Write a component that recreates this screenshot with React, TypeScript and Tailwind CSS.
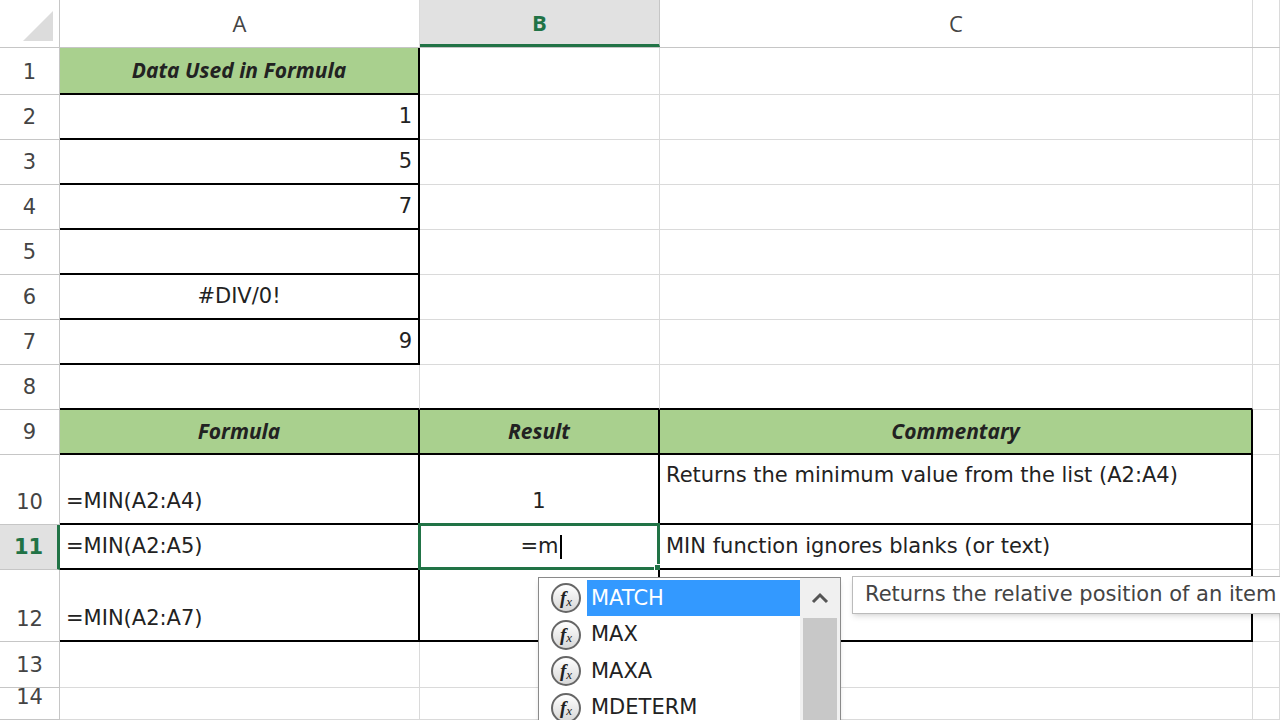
import React from "react";

const cols = [
  { k: "A", w: "w-[360px]" },
  { k: "B", w: "w-[240px]" },
  { k: "C", w: "w-[593px]" },
  { k: "", w: "flex-1" },
];
const heights = ["h-[47px]", "h-[45px]", "h-[45px]", "h-[45px]", "h-[45px]", "h-[45px]", "h-[45px]", "h-[45px]", "h-[45px]", "h-[70px]", "h-[45px]", "h-[72px]", "h-[46px]", "h-[32px]"];

type Cell = { t?: string; align?: string; head?: boolean; top?: boolean };
const data: Record<string, Cell> = {
  A1: { t: "Data Used in Formula", head: true },
  A2: { t: "1", align: "right" },
  A3: { t: "5", align: "right" },
  A4: { t: "7", align: "right" },
  A6: { t: "#DIV/0!", align: "center" },
  A7: { t: "9", align: "right" },
  A9: { t: "Formula", head: true },
  B9: { t: "Result", head: true },
  C9: { t: "Commentary", head: true },
  A10: { t: "=MIN(A2:A4)" },
  B10: { t: "1", align: "center" },
  C10: { t: "Returns the minimum value from the list (A2:A4)", top: true },
  A11: { t: "=MIN(A2:A5)" },
  C11: { t: "MIN function ignores blanks (or text)" },
  A12: { t: "=MIN(A2:A7)" },
};

function inTable(c: number, r: number) {
  if (c === 0 && r >= 1 && r <= 7) return true;
  if (c <= 2 && r >= 9 && r <= 12) return true;
  return false;
}

function Fx() {
  return (
    <span className="w-[30px] h-[30px] rounded-full border-2 border-[#666] bg-gradient-to-b from-white to-[#d8d8d8] flex items-center justify-center text-[19px] italic text-[#222] shrink-0" style={{ fontFamily: "'Liberation Serif', serif" }}>
      <span className="font-bold">f</span><span className="text-[13px] mt-[6px]">x</span>
    </span>
  );
}

function cellClass(d: Cell) {
  if (d.head) return "items-center justify-center bg-[#a9d08e] font-bold italic text-[21px]";
  const v = d.top ? "items-start pt-[2px] leading-[36px]" : "items-end pb-[6px]";
  const h = d.align === "right" ? "justify-end" : d.align === "center" ? "justify-center" : "justify-start";
  return `${v} ${h}`;
}

export default function App() {
  return (
    <div className="relative w-[1280px] h-[720px] overflow-hidden bg-white text-[21px] text-[#222]" style={{ fontFamily: "'DejaVu Sans', sans-serif" }}>
      <div className="flex h-[48px] border-b border-[#c6c6c6]">
        <div className="w-[60px] border-r border-[#c6c6c6] relative bg-white">
          <div className="absolute right-[6px] bottom-[6px] w-0 h-0 border-l-[30px] border-l-transparent border-b-[30px] border-b-[#dcdcdc]" />
        </div>
        {cols.map((c) => (
          <div key={c.k} className={`${c.w} flex items-center justify-center border-r ${c.k === "B" ? "bg-[#e1e1e1] border-b-[3px] border-b-[#217346] text-[#217346] font-bold border-[#c6c6c6]" : "border-[#dadada] text-[#444]"}`} style={{ fontFamily: "'Open Sans', sans-serif" }}>
            <span className="text-[22px]">{c.k}</span>
          </div>
        ))}
      </div>
      {heights.map((h, ri) => {
        const r = ri + 1;
        const sel = r === 11;
        return (
          <div key={r} className={`flex ${h}`}>
            <div className={`w-[60px] shrink-0 border-r border-b border-[#c6c6c6] flex items-end justify-center pb-[6px] ${sel ? "bg-[#e1e1e1] text-[#217346] font-bold border-r-[3px] border-r-[#217346]" : "text-[#444]"}`}>
              {r}
            </div>
            {cols.map((c, ci) => {
              const d = data[c.k + r] || {};
              const rightBlack = inTable(ci, r) || inTable(ci + 1, r);
              const botBlack = inTable(ci, r) || inTable(ci, r + 1);
              const sel11 = c.k === "B" && r === 11;
              return (
                <div
                  key={ci}
                  className={`${c.w} shrink-0 relative flex px-[6px] ${cellClass(d)} ${rightBlack ? "border-r-2 border-r-black" : "border-r border-r-[#dadada]"} ${botBlack ? "border-b-2 border-b-black" : "border-b border-b-[#dadada]"}`}
                  style={d.head ? { fontFamily: "'Open Sans', sans-serif" } : undefined}
                >
                  {d.t}
                  {sel11 && (
                    <div className="absolute -left-[2px] -top-[2px] -right-[2px] -bottom-[2px] border-[3px] border-[#217346] flex items-center justify-center pl-[4px]">
                      <span className="relative">
                        =m<span className="inline-block w-[2px] h-[24px] bg-black align-middle ml-[1px]" />
                      </span>
                      <div className="absolute -right-[4px] -bottom-[4px] w-[7px] h-[7px] bg-[#217346] border border-white" />
                    </div>
                  )}
                </div>
              );
            })}
          </div>
        );
      })}
      <div className="absolute left-[538px] top-[577px] w-[303px] h-[150px] bg-white border border-[#8a8a8a] shadow-md flex">
        <div className="flex-1 flex flex-col pt-[2px]">
          {["MATCH", "MAX", "MAXA", "MDETERM"].map((n, i) => (
            <div key={n} className="h-[38px] flex items-center gap-[6px] pl-[12px]">
              <Fx />
              <span className={`h-[36px] flex items-center pl-[4px] flex-1 ${i === 0 ? "bg-[#3399ff] text-white" : "text-[#222]"}`}>{n}</span>
            </div>
          ))}
        </div>
        <div className="w-[40px] flex flex-col items-center bg-[#f0f0f0]">
          <div className="h-[40px] flex items-center justify-center">
            <svg width="18" height="12" viewBox="0 0 18 12"><path d="M2 10 L9 3 L16 10" stroke="#555" strokeWidth="3" fill="none" /></svg>
          </div>
          <div className="w-[34px] flex-1 bg-[#c8c8c8]" />
        </div>
      </div>
      <div className="absolute left-[852px] top-[576px] w-[440px] h-[38px] bg-white border border-[#bbb] shadow-md flex items-center pl-[12px] text-[#444] whitespace-nowrap">
        Returns the relative position of an item
      </div>
    </div>
  );
}
